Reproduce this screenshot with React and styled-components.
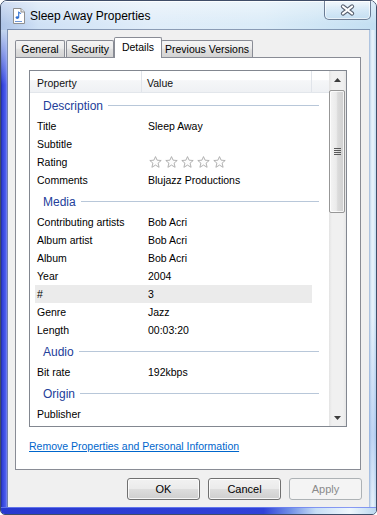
import React from "react";
import styled, { createGlobalStyle } from "styled-components";

const Global = createGlobalStyle`
  html, body { margin: 0; padding: 0; width: 377px; height: 515px; overflow: hidden; background: #ffffff; }
  #root { width: 377px; height: 515px; }
  * { box-sizing: border-box; }
`;

const Window = styled.div`
  width: 377px;
  height: 515px;
  border: 1px solid #3f4d68;
  border-radius: 7px 7px 5px 5px;
  overflow: hidden;
  display: flex;
  flex-direction: column;
  font-family: "Liberation Sans", Arial, sans-serif;
  background: #c9dcf0;
`;

const TitleBar = styled.div`
  height: 29px;
  flex: none;
  display: flex;
  align-items: flex-start;
  padding: 0 5px 0 10px;
  background:
    linear-gradient(to bottom, rgba(255, 255, 255, 0.45), rgba(255, 255, 255, 0) 80%),
    linear-gradient(to right, #aec4e8 0%, #cfe1f5 10%, #e0edf9 40%, #dbecf8 70%, #c3dff2 100%);
  box-shadow: inset 0 1px 0 rgba(255, 255, 255, 0.8);
`;

const TitleIcon = styled.svg`
  flex: none;
  margin-top: 7px;
`;

const TitleText = styled.div`
  margin: 7px 0 0 3px;
  font-size: 12px;
  line-height: 16px;
  color: #000;
`;

const CloseButton = styled.div`
  margin-left: auto;
  width: 47px;
  height: 19px;
  border: 1px solid rgba(60, 78, 108, 0.7);
  border-top: none;
  border-radius: 0 0 5px 5px;
  background: linear-gradient(to bottom, rgba(255, 255, 255, 0.55), rgba(214, 232, 247, 0.4) 50%, rgba(190, 218, 240, 0.5));
  box-shadow: inset 0 0 0 1px rgba(255, 255, 255, 0.6);
  display: flex;
  align-items: center;
  justify-content: center;
`;

const Body = styled.div`
  flex: 1;
  display: flex;
  min-height: 0;
`;

const LeftEdge = styled.div`
  width: 7px;
  flex: none;
  background:
    linear-gradient(to bottom, #c3d5ee 0px, rgba(195, 213, 238, 0.55) 25px, rgba(195, 213, 238, 0) 55px),
    linear-gradient(to right, #1d2896 0px, #3040d4 1px, #3e4fe4 3px, #5262ee 5px, #8a95f0 6px, #b9c0ee 7px);
`;

const RightEdge = styled.div`
  width: 7px;
  flex: none;
  background:
    linear-gradient(to bottom, rgba(255, 255, 255, 0) 60%, rgba(120, 160, 230, 0.35) 85%, rgba(255, 255, 255, 0) 100%),
    linear-gradient(to right, #9fb7d8 0px, #dbeaf7 2px, #eaf4fc 4px, #c2dbf0 7px);
`;

const BottomEdge = styled.div`
  height: 7px;
  flex: none;
  background: linear-gradient(to right, #2838cf 0%, #3142d8 70%, #6f8ee6 77%, #c7def6 84%, #eef7fd 93%, #bcd7ef 100%);
  box-shadow: inset 0 1px 0 rgba(110, 130, 240, 0.8);
`;

const Client = styled.div`
  width: 361px;
  flex: none;
  background: #f0f0f0;
  outline: 1px solid rgba(70, 90, 125, 0.55);
  display: flex;
  flex-direction: column;
  padding: 7px 8px 0 7px;
`;

const TabStrip = styled.div`
  height: 20px;
  display: flex;
  align-items: flex-end;
  position: relative;
  z-index: 1;
`;

const Tab = styled.div`
  width: ${(p) => p.$w}px;
  margin-left: ${(p) => p.$ml || 0}px;
  height: ${(p) => (p.$active ? 21 : 17)}px;
  margin-bottom: ${(p) => (p.$active ? -1 : 0)}px;
  border: 1px solid #898c95;
  border-bottom: none;
  border-radius: 2px 2px 0 0;
  background: ${(p) =>
    p.$active
      ? "#ffffff"
      : "linear-gradient(to bottom, #f4f4f4 0%, #ececec 45%, #dfdfdf 55%, #d3d3d3 100%)"};
  font-size: 10.5px;
  color: #000;
  display: flex;
  align-items: center;
  justify-content: center;
  padding-bottom: ${(p) => (p.$active ? 3 : 0)}px;
  white-space: nowrap;
`;

const Panel = styled.div`
  height: 413px;
  border: 1px solid #898c95;
  background: #ffffff;
  padding: 12px 13px;
  display: flex;
  flex-direction: column;
`;

const ListBox = styled.div`
  height: 357px;
  border: 1px solid #828790;
  display: flex;
  flex: none;
  overflow: hidden;
`;

const ListContent = styled.div`
  flex: 1;
  min-width: 0;
  overflow: hidden;
  display: flex;
  flex-direction: column;
`;

const Header = styled.div`
  height: 22px;
  flex: none;
  display: flex;
  background: linear-gradient(to bottom, #ffffff 0%, #ffffff 42%, #f5f6f8 46%, #eff1f4 100%);
  border-bottom: 1px solid #e2e6eb;
`;

const HeaderCell = styled.div`
  width: ${(p) => p.$w}px;
  flex: ${(p) => (p.$w ? "none" : 1)};
  padding-left: ${(p) => p.$pl || 0}px;
  border-right: ${(p) => (p.$w ? "1px solid #e0e4ea" : "none")};
  font-size: 10.5px;
  line-height: 24px;
  color: #111;
`;

const GroupHeader = styled.div`
  height: 24px;
  flex: none;
  display: flex;
  align-items: center;
  padding: 1px 10px 0 13px;
  font-size: 12px;
  color: #23409a;
`;

const GroupLine = styled.div`
  flex: 1;
  height: 1px;
  margin-left: 5px;
  background: #b8c7d9;
`;

const Row = styled.div`
  height: 18px;
  flex: none;
  width: 277px;
  margin-left: 5px;
  display: flex;
  align-items: center;
  background: ${(p) => (p.$hl ? "#ebebeb" : "transparent")};
  font-size: 10.5px;
  color: #000;
  white-space: nowrap;
`;

const Label = styled.div`
  width: 107px;
  flex: none;
  padding-left: 2px;
`;

const Value = styled.div`
  padding-left: 6px;
  display: flex;
  align-items: center;
`;

const Stars = styled.div`
  display: flex;
  gap: 3px;
  padding-left: 1px;
`;

const ScrollBar = styled.div`
  width: 17px;
  flex: none;
  display: flex;
  flex-direction: column;
  background: linear-gradient(to right, #e3e3e3 0px, #f0f0f0 3px, #f0f0f0 14px, #e6e6e6 17px);
`;

const ArrowButton = styled.div`
  height: 17px;
  flex: none;
  display: flex;
  align-items: center;
  justify-content: center;
`;

const Thumb = styled.div`
  height: 123px;
  margin: 2px 1px 0 0;
  flex: none;
  border: 1px solid #979797;
  border-radius: 2px;
  background: linear-gradient(to right, #f4f4f4 0%, #ebebeb 45%, #dbdbdb 55%, #d0d0d0 100%);
  box-shadow: inset 0 0 0 1px rgba(255, 255, 255, 0.75);
  display: flex;
  align-items: center;
  justify-content: center;
`;

const Track = styled.div`
  flex: 1;
`;

const Link = styled.a`
  margin-top: 12px;
  font-size: 10.5px;
  line-height: 14px;
  color: #0066cc;
  text-decoration: underline;
  align-self: flex-start;
  cursor: pointer;
`;

const ButtonRow = styled.div`
  display: flex;
  justify-content: flex-end;
  gap: 8px;
  margin: 8px -1px 0 0;
`;

const Button = styled.div`
  width: 73px;
  height: 22px;
  border: 1px solid ${(p) => (p.$disabled ? "#adb2b5" : "#707070")};
  border-radius: 3px;
  background: ${(p) =>
    p.$disabled
      ? "#f4f4f4"
      : "linear-gradient(to bottom, #f2f2f2 0%, #ebebeb 48%, #dddddd 52%, #cfcfcf 100%)"};
  box-shadow: ${(p) => (p.$disabled ? "none" : "inset 0 0 0 1px rgba(255,255,255,0.8)")};
  color: ${(p) => (p.$disabled ? "#8a8a8a" : "#000")};
  font-size: 11px;
  display: flex;
  align-items: center;
  justify-content: center;
`;

const Star = () => (
  <svg width="13" height="12" viewBox="0 0 13 12">
    <polygon
      points="6.5,0.6 8.1,4.2 12.2,4.5 9.1,7.1 10.1,11.3 6.5,9.1 2.9,11.3 3.9,7.1 0.8,4.5 4.9,4.2"
      fill="#fcfcfc"
      stroke="#a9a9a9"
      strokeWidth="0.9"
      strokeLinejoin="round"
    />
  </svg>
);

const groups = [
  {
    name: "Description",
    items: [
      ["Title", "Sleep Away"],
      ["Subtitle", ""],
      ["Rating", "stars"],
      ["Comments", "Blujazz Productions"],
    ],
  },
  {
    name: "Media",
    items: [
      ["Contributing artists", "Bob Acri"],
      ["Album artist", "Bob Acri"],
      ["Album", "Bob Acri"],
      ["Year", "2004"],
      ["#", "3", true],
      ["Genre", "Jazz"],
      ["Length", "00:03:20"],
    ],
  },
  { name: "Audio", items: [["Bit rate", "192kbps"]] },
  { name: "Origin", items: [["Publisher", ""]] },
];

export default function App() {
  return (
    <>
      <Global />
      <Window>
        <TitleBar>
          <TitleIcon width="16" height="16" viewBox="0 0 16 16">
            <path d="M2.5 0.5 H10 L13.5 4 V15.5 H2.5 Z" fill="#ffffff" stroke="#8f8f8f" />
            <path d="M10 0.5 V4 H13.5" fill="#e8e8e8" stroke="#8f8f8f" />
            <ellipse cx="6.3" cy="9.6" rx="1.7" ry="1.3" fill="#2f6fd0" />
            <path d="M7.7 9.4 V4.2 L10 5.6" fill="none" stroke="#2f6fd0" strokeWidth="1.1" />
            <rect x="4" y="13" width="7" height="1" fill="#6d96d8" />
          </TitleIcon>
          <TitleText>Sleep Away Properties</TitleText>
          <CloseButton>
            <svg width="15" height="12" viewBox="0 0 15 12">
              <path d="M3 2.5 L12 9.5 M12 2.5 L3 9.5" stroke="#5b6473" strokeWidth="4.2" strokeLinecap="round" />
              <path d="M3 2.5 L12 9.5 M12 2.5 L3 9.5" stroke="#ffffff" strokeWidth="2.2" strokeLinecap="round" />
            </svg>
          </CloseButton>
        </TitleBar>
        <Body>
          <LeftEdge />
          <Client>
            <TabStrip>
              <Tab $w={50}>General</Tab>
              <Tab $w={48} $ml={1}>Security</Tab>
              <Tab $w={48} $active>Details</Tab>
              <Tab $w={92} $ml={-1}>Previous Versions</Tab>
            </TabStrip>
            <Panel>
              <ListBox>
                <ListContent>
                  <Header>
                    <HeaderCell $w={112} $pl={7}>Property</HeaderCell>
                    <HeaderCell $w={170} $pl={5}>Value</HeaderCell>
                    <HeaderCell />
                  </Header>
                  {groups.map((g) => (
                    <React.Fragment key={g.name}>
                      <GroupHeader>
                        {g.name}
                        <GroupLine />
                      </GroupHeader>
                      {g.items.map(([label, value, hl]) => (
                        <Row key={label} $hl={hl}>
                          <Label>{label}</Label>
                          <Value>
                            {value === "stars" ? (
                              <Stars>
                                {[0, 1, 2, 3, 4].map((i) => (
                                  <Star key={i} />
                                ))}
                              </Stars>
                            ) : (
                              value
                            )}
                          </Value>
                        </Row>
                      ))}
                    </React.Fragment>
                  ))}
                </ListContent>
                <ScrollBar>
                  <ArrowButton>
                    <svg width="7" height="4" viewBox="0 0 7 4">
                      <path d="M0 4 L3.5 0 L7 4 Z" fill="#3c3c3c" />
                    </svg>
                  </ArrowButton>
                  <Thumb>
                    <svg width="7" height="8" viewBox="0 0 7 8">
                      {[0, 2, 4, 6].map((y) => (
                        <rect key={y} x="0" y={y} width="7" height="1" fill="#5a5a5a" />
                      ))}
                    </svg>
                  </Thumb>
                  <Track />
                  <ArrowButton>
                    <svg width="7" height="4" viewBox="0 0 7 4">
                      <path d="M0 0 L7 0 L3.5 4 Z" fill="#3c3c3c" />
                    </svg>
                  </ArrowButton>
                </ScrollBar>
              </ListBox>
              <Link>Remove Properties and Personal Information</Link>
            </Panel>
            <ButtonRow>
              <Button>OK</Button>
              <Button>Cancel</Button>
              <Button $disabled>Apply</Button>
            </ButtonRow>
          </Client>
          <RightEdge />
        </Body>
        <BottomEdge />
      </Window>
    </>
  );
}
